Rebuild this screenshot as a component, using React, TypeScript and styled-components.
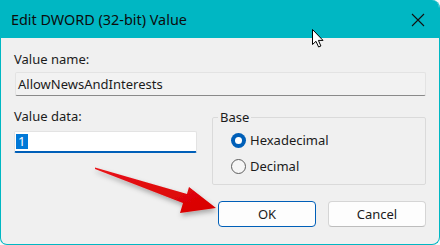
import React from 'react';
import styled, { createGlobalStyle } from 'styled-components';

const GlobalStyle = createGlobalStyle`
  html, body {
    margin: 0;
    padding: 0;
    background: #f7f7f7;
  }
  * {
    box-sizing: border-box;
  }
`;

const Window = styled.div`
  position: relative;
  width: 440px;
  height: 245px;
  display: flex;
  flex-direction: column;
  background: #f0f0f0;
  border: 1px solid #00b7c3;
  border-top: none;
  border-radius: 0 8px 8px 7px;
  overflow: hidden;
  font-family: "Noto Sans", "Open Sans", sans-serif;
  color: #1b1b1b;
`;

const TitleBar = styled.div`
  height: 38px;
  flex-shrink: 0;
  display: flex;
  align-items: center;
  justify-content: space-between;
  padding: 0 14px 0 10px;
  background: #00b7c3;
  color: #0c0c0c;
  font-size: 14.4px;
`;

const CloseButton = styled.button`
  width: 14px;
  height: 14px;
  padding: 0;
  border: none;
  background: none;
  display: flex;
  margin-top: 1px;
`;

const Body = styled.div`
  flex: 1;
  display: flex;
  flex-direction: column;
  padding: 12px 13px 17px 13px;
`;

const Label = styled.div`
  font-size: 13px;
  line-height: 18px;
`;

const TextBox = styled.div<{ $active?: boolean }>`
  display: flex;
  align-items: center;
  height: ${(p) => (p.$active ? '22px' : '24px')};
  padding-left: ${(p) => (p.$active ? '1px' : '2px')};
  font-size: 13px;
  background: ${(p) => (p.$active ? '#ffffff' : '#f2f2f2')};
  border: 1px solid #e3e3e3;
  border-bottom: ${(p) => (p.$active ? '2px solid #005fb8' : '1px solid #8a8a8a')};
  border-radius: 2px;
`;

const NameBox = styled(TextBox)`
  margin: 4px 0 0 1px;
`;

const Selected = styled.span`
  background: #0078d7;
  color: #ffffff;
  line-height: 15px;
  padding: 0 3px 0 2px;
`;

const Row = styled.div`
  display: flex;
  gap: 15px;
  margin-top: 11px;
`;

const DataColumn = styled.div`
  width: 184px;
  display: flex;
  flex-direction: column;
  gap: 6px;
`;

const GroupBox = styled.fieldset`
  width: 215px;
  margin: 2px 0 0 0;
  padding: 2px 0 5px 18px;
  border: 1px solid #dadada;
  border-radius: 2px;
`;

const Legend = styled.legend`
  font-size: 13px;
  line-height: 16px;
  padding: 0 2px;
  margin-left: -13px;
`;

const RadioRow = styled.label`
  display: flex;
  align-items: center;
  gap: 4px;
  height: 26px;
  font-size: 13px;
`;

const RadioDot = styled.span<{ $checked?: boolean }>`
  width: 15px;
  height: 15px;
  border-radius: 50%;
  background: ${(p) => (p.$checked ? '#005fb8' : '#f6f6f6')};
  border: ${(p) => (p.$checked ? 'none' : '1px solid #5e5e5e')};
  display: flex;
  align-items: center;
  justify-content: center;
  &::after {
    content: '';
    display: ${(p) => (p.$checked ? 'block' : 'none')};
    width: 7px;
    height: 7px;
    border-radius: 50%;
    background: #ffffff;
  }
`;

const ButtonRow = styled.div`
  margin-top: auto;
  display: flex;
  justify-content: flex-end;
  gap: 12px;
`;

const Button = styled.button<{ $primary?: boolean }>`
  width: 98px;
  height: 26px;
  font-family: inherit;
  font-size: 13px;
  color: #1b1b1b;
  background: #fdfdfd;
  border: 1px solid ${(p) => (p.$primary ? '#005fb8' : '#d5d5d5')};
  border-bottom-color: ${(p) => (p.$primary ? '#005fb8' : '#bdbdbd')};
  border-radius: 4px;
  padding: 0;
`;

const Overlay = styled.svg`
  position: absolute;
  pointer-events: none;
`;

export default function App() {
  return (
    <>
      <GlobalStyle />
      <Window>
        <TitleBar>
          <span>Edit DWORD (32-bit) Value</span>
          <CloseButton aria-label="Close">
            <svg width="14" height="14" viewBox="0 0 14 14">
              <path d="M1 1 L13 13 M13 1 L1 13" stroke="#111" strokeWidth="1.1" />
            </svg>
          </CloseButton>
        </TitleBar>
        <Body>
          <Label>Value name:</Label>
          <NameBox>AllowNewsAndInterests</NameBox>
          <Row>
            <DataColumn>
              <Label>Value data:</Label>
              <TextBox $active>
                <Selected>1</Selected>
              </TextBox>
            </DataColumn>
            <GroupBox>
              <Legend>Base</Legend>
              <RadioRow>
                <RadioDot $checked />
                Hexadecimal
              </RadioRow>
              <RadioRow>
                <RadioDot />
                Decimal
              </RadioRow>
            </GroupBox>
          </Row>
          <ButtonRow>
            <Button $primary>OK</Button>
            <Button>Cancel</Button>
          </ButtonRow>
        </Body>

        <Overlay width="440" height="245" style={{ left: -1, top: 0 }}>
          <defs>
            <filter id="arrowShadow" x="-20%" y="-20%" width="140%" height="160%">
              <feDropShadow dx="1" dy="3" stdDeviation="2.5" floodColor="#000" floodOpacity="0.3" />
            </filter>
            <linearGradient id="arrowFill" x1="0" y1="0" x2="1" y2="1">
              <stop offset="0" stopColor="#e8141a" />
              <stop offset="1" stopColor="#d80000" />
            </linearGradient>
          </defs>
          <polygon
            points="95,167.5 187,194 189,187 216,208 180,213 183,203 95,169"
            fill="url(#arrowFill)"
            filter="url(#arrowShadow)"
          />
        </Overlay>

        <Overlay width="14" height="20" viewBox="0 0 14 20" style={{ left: 311, top: 29 }}>
          <path
            d="M0.5 0.5 L0.5 15.5 L4 12.3 L6.6 18 L8.9 17 L6.4 11.4 L11 11.4 Z"
            fill="#ffffff"
            stroke="#000000"
            strokeWidth="1"
            strokeLinejoin="miter"
          />
        </Overlay>
      </Window>
    </>
  );
}
